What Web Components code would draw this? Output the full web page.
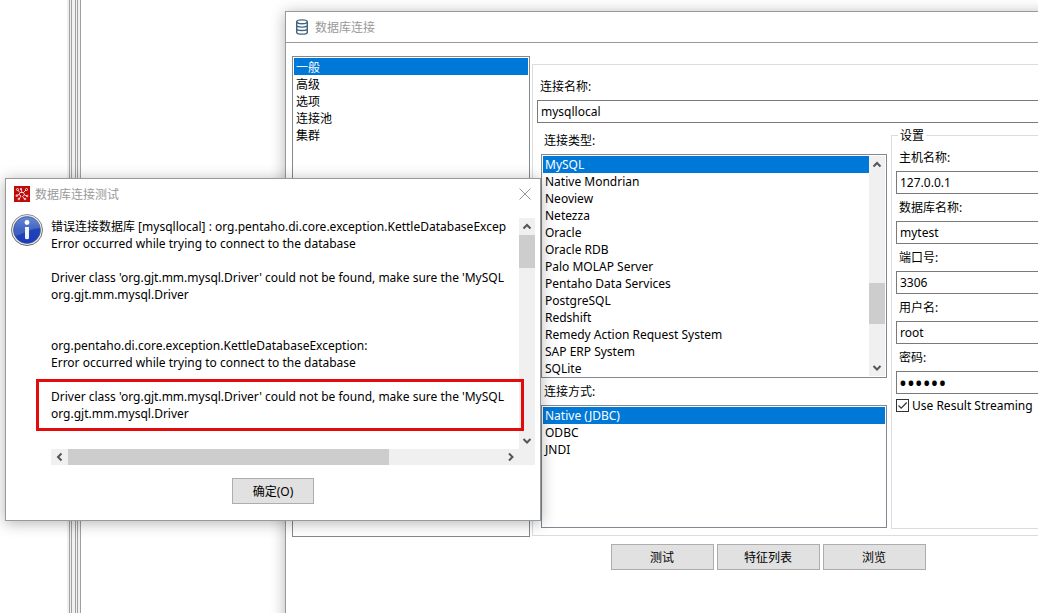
<!DOCTYPE html>
<html lang="zh-CN">
<head>
<meta charset="utf-8">
<title>数据库连接</title>
<style>
html, body { margin: 0; height: 100%; }
body { font: 12px/17px "Noto Sans", "Noto Sans CJK SC", sans-serif; color: #000; background: #fff; }
</style>
</head>
<body>
<app-desktop></app-desktop>

<template id="t-desktop">
<style>
:host { display: block; position: relative; min-height: 100vh; overflow: hidden; }
.workspace { display: flex; min-height: 100vh; }
.tree { width: 67px; }
.sash { display: flex; background: #f0f0f0; border-right: 1px solid #a0a0a0; padding: 0 2px; gap: 3px; }
.sash i { width: 1px; border: solid #a0a0a0; border-width: 0 1px; }
database-window { position: absolute; left: 285px; top: 11px; right: -213px; }
message-window { position: absolute; left: 5px; top: 178px; width: 536px; }
</style>
<div class="workspace"><div class="tree"></div><div class="sash"><i></i><i></i></div></div>
<database-window></database-window>
<message-window></message-window>
</template>

<template id="t-frame">
<style>
:host { display: block; box-sizing: border-box; border: 1px solid #999; background: #fff; box-shadow: 0 2px 14px rgba(0,0,0,.3); }
header { display: flex; align-items: center; gap: 5px; height: 30px; padding: 0 9px 0 8px; color: #999; }
:host([ruled]) header { border-bottom: 1px solid #999; }
h1 { flex: 1; margin: 0; font: inherit; }
</style>
<header><slot name="icon"></slot><h1><slot name="title"></slot></h1><slot name="action"></slot></header>
<slot></slot>
</template>

<template id="t-database">
<style>
:host { display: block; }
window-frame { min-height: 640px; }
svg { display: block; }
.body { display: flex; gap: 2px; padding: 13px 6px 0; }
.nav { width: 238px; height: 481px; }
.page { flex: 1; box-sizing: border-box; height: 472px; margin-top: 8px; border: 1px solid #dcdcdc; padding: 8px 4px 0; }
.cols { display: flex; gap: 4px; padding-left: 4px; }
.left { width: 346px; padding-top: 4px; }
.types { height: 224px; }
.access { height: 123px; }
fieldset { flex: 1; min-width: 0; box-sizing: border-box; height: 402px; margin: 4px 0 0; padding: 0 4px; border: 1px solid #dcdcdc; }
legend { margin: 0 0 0 2px; padding: 0 2px; }
.check { display: flex; align-items: center; gap: 3px; height: 22px; }
.check input { appearance: none; width: 13px; height: 13px; margin: 0; border: 1px solid #333; background: #fff url("data:image/svg+xml,%3Csvg xmlns='http://www.w3.org/2000/svg' viewBox='0 0 11 11'%3E%3Cpath d='M1.5 5.5l2.7 2.7 5.5-5.7' fill='none' stroke='%23333' stroke-width='1.2'/%3E%3C/svg%3E"); }
footer { display: flex; justify-content: center; gap: 3px; padding-top: 7px; }
</style>
<window-frame ruled>
  <svg slot="icon" width="16" height="16" viewBox="0 0 16 16" fill="none" stroke="#41647f" stroke-width="1.4"><path d="M2.700 2.800v10.400c0 2.600 10.600 2.600 10.600 0V2.800"/><ellipse cx="8" cy="2.800" rx="5.300" ry="1.900"/><path d="M2.700 6.300c0 2.400 10.600 2.400 10.600 0M2.700 9.700c0 2.400 10.600 2.400 10.600 0"/></svg>
  <span slot="title">数据库连接</span>
  <div class="body">
    <list-box class="nav" label="分类" items="一般|高级|选项|连接池|集群"></list-box>
    <div class="page">
      <text-field label="连接名称:" value="mysqllocal"></text-field>
      <div class="cols">
        <div class="left">
          <list-box class="types" caption="连接类型:" thumb="59 22" items="MySQL|Native Mondrian|Neoview|Netezza|Oracle|Oracle RDB|Palo MOLAP Server|Pentaho Data Services|PostgreSQL|Redshift|Remedy Action Request System|SAP ERP System|SQLite"></list-box>
          <list-box class="access" caption="连接方式:" items="Native (JDBC)|ODBC|JNDI"></list-box>
        </div>
        <fieldset>
          <legend>设置</legend>
          <text-field label="主机名称:" value="127.0.0.1"></text-field>
          <text-field label="数据库名称:" value="mytest"></text-field>
          <text-field label="端口号:" value="3306"></text-field>
          <text-field label="用户名:" value="root"></text-field>
          <text-field label="密码:" value="secret" type="password"></text-field>
          <label class="check"><input type="checkbox" checked>Use Result Streaming</label>
        </fieldset>
      </div>
    </div>
  </div>
  <footer><push-button>测试</push-button><push-button>特征列表</push-button><push-button>浏览</push-button></footer>
</window-frame>
</template>

<template id="t-list">
<style>
:host { display: block; }
label { display: block; height: 27px; line-height: 27px; padding-left: 3px; }
.box { display: flex; box-sizing: border-box; border: 1px solid #828790; padding: 1px; background: #fff; }
select { flex: 1; min-width: 0; height: 100%; appearance: none; border: 0; border-radius: 0; outline: 0; margin: 0; padding: 0; font: inherit; color: inherit; background: none; overflow: hidden; }
option { height: 17px; min-height: 17px; line-height: 17px; padding: 0 2px; box-sizing: border-box; }
option:checked { background: linear-gradient(#0078d7, #0078d7); -webkit-text-fill-color: #fff; }
</style>
<label for="s"></label><div class="box"><select id="s"></select></div>
</template>

<template id="t-field">
<style>
:host { display: block; }
label { display: block; height: 27px; line-height: 27px; padding-left: 3px; }
input { display: block; box-sizing: border-box; width: 100%; height: 23px; margin: 0; border: 1px solid #7a7a7a; border-radius: 0; padding: 0 3px; font: inherit; color: inherit; background: #fff; outline: 0; }
input[type=password] { font-size: 21px; padding: 0 2px; }
</style>
<label for="f"></label><input id="f">
</template>

<template id="t-button">
<style>
:host { display: block; width: 103px; }
button { box-sizing: border-box; display: block; width: 100%; height: 26px; margin: 0; padding: 0; border: 1px solid #adadad; border-radius: 0; background: #e1e1e1; font: inherit; color: #000; }
</style>
<button type="button"><slot></slot></button>
</template>

<template id="t-scroll">
<style>
:host { display: flex; flex-direction: column; width: 16px; background: #f0f0f0; }
.track { flex: 1; display: flex; flex-direction: column; }
.thumb { background: #cdcdcd; }
svg { display: block; width: 16px; height: 17px; fill: none; stroke: #555; stroke-width: 2; }
:host([horizontal]) { flex-direction: row; width: auto; height: 16px; }
:host([horizontal]) .track { flex-direction: row; }
:host([horizontal]) svg { width: 17px; height: 16px; }
:host([horizontal]) svg path { transform: rotate(-90deg); transform-origin: 8px 8px; }
</style>
<svg viewBox="0 0 16 16"><path d="M4.500 10L8 6.500l3.500 3.500"/></svg><div class="track"><div class="space"></div><div class="thumb"></div></div><svg viewBox="0 0 16 16"><path d="M4.500 6.500L8 10l3.500-3.500"/></svg>
</template>

<template id="t-message">
<style>
:host { display: block; }
svg { display: block; }
window-frame { position: relative; }
.close { border: 0; padding: 0; margin: 0; background: none; }
.content { display: flex; align-items: flex-start; gap: 8px; padding: 9px 5px 13px; }
.info { flex: none; margin-top: -4px; }
.log { flex: 1; min-width: 0; display: grid; grid-template: 231px 16px / 1fr 16px; background: #f0f0f0; }
textarea { display: block; box-sizing: border-box; width: 100%; height: 100%; margin: 0; border: 0; padding: 0; font: inherit; color: inherit; background: #fff; resize: none; overflow: hidden; white-space: pre; outline: 0; }
.mark { position: absolute; left: 30px; top: 200px; width: 488px; height: 52px; box-sizing: border-box; border: 3px solid #e30b0b; pointer-events: none; }
footer { display: flex; justify-content: center; padding-bottom: 16px; }
footer push-button { width: 82px; }
</style>
<window-frame>
  <svg slot="icon" width="16" height="16" viewBox="0 0 16 16"><path fill="#c00b0b" d="M0 0h16v16H0z"/><g fill="none" stroke="#fff" stroke-width=".8"><path d="M3.500 4L6 6.500l-1 2-2.500 1M6 6.500h3.500L12 4M9.500 6.500l1 2.500 2.500 1M5 8.500L7 10l-2 3M10.500 9L8.500 10.500l2 2.500M7 3l1 3.500"/><circle cx="3.500" cy="3.500" r="1"/><circle cx="12.500" cy="3.500" r="1"/><circle cx="7" cy="3" r=".7"/><circle cx="2.800" cy="9.700" r=".8"/><circle cx="13.200" cy="10" r=".8"/><circle cx="4.800" cy="13" r=".8"/><circle cx="11" cy="13" r=".8"/></g></svg>
  <span slot="title">数据库连接测试</span>
  <button class="close" slot="action" type="button" aria-label="关闭"><svg width="12" height="12" viewBox="0 0 12 12"><path d="M.5 .5l11 11M11.500 .5l-11 11" stroke="#999"/></svg></button>
  <div class="content">
    <svg class="info" width="32" height="32" viewBox="0 0 32 32">
      <defs><linearGradient id="blue" x2="0" y2="1"><stop offset="0" stop-color="#4a73cf"/><stop offset=".5" stop-color="#1e45b5"/><stop offset="1" stop-color="#1a3ac0"/></linearGradient><linearGradient id="rim" x2="0" y2="1"><stop offset="0" stop-color="#8c8c8c"/><stop offset="1" stop-color="#666"/></linearGradient></defs>
      <circle cx="16" cy="16" r="15.500" fill="#eee" stroke="url(#rim)"/><circle cx="16" cy="16" r="13.500" fill="url(#blue)" stroke="#4a5580" stroke-width=".6"/>
      <path d="M3 17C3 8 9 3.500 16 3.500S29 8 29 14C21 14 12 20 5 22 4 20.500 3 19 3 17z" fill="#fff" opacity=".16"/>
      <circle cx="16" cy="8.500" r="2.400" fill="#fff"/><path d="M14 13h4v11.500c-1 1-3 1-4 0z" fill="#f1f3fa"/>
    </svg>
    <div class="log">
      <textarea readonly wrap="off" aria-label="错误信息"></textarea>
      <scroll-bar thumb="0 17"></scroll-bar>
      <scroll-bar horizontal thumb="0 74"></scroll-bar>
    </div>
  </div>
  <footer><push-button>确定(O)</push-button></footer>
  <div class="mark"></div>
</window-frame>
</template>

<script>
class Base extends HTMLElement {
  constructor() {
    super();
    this.attachShadow({ mode: 'open' }).append(document.getElementById(this.constructor.template).content.cloneNode(true));
  }
  $(selector) { return this.shadowRoot.querySelector(selector); }
}
class AppDesktop extends Base { static template = 't-desktop'; }
class WindowFrame extends Base { static template = 't-frame'; }
class DatabaseWindow extends Base { static template = 't-database'; }
class PushButton extends Base { static template = 't-button'; }

class ScrollBar extends Base {
  static template = 't-scroll';
  connectedCallback() {
    const [start, size] = this.getAttribute('thumb').split(' ');
    this.$('.space').style.flex = `0 0 ${start}%`;
    this.$('.thumb').style.flex = `0 0 ${size}%`;
  }
}

class TextField extends Base {
  static template = 't-field';
  connectedCallback() {
    this.$('label').textContent = this.getAttribute('label');
    this.$('input').type = this.getAttribute('type') || 'text';
    this.$('input').value = this.getAttribute('value');
  }
}

class ListBox extends Base {
  static template = 't-list';
  connectedCallback() {
    const select = this.$('select'), label = this.$('label');
    const names = this.getAttribute('items').split('|');
    select.size = Math.max(names.length, 2);
    names.forEach((name, i) => select.add(new Option(name, name, i === 0, i === 0)));
    if (this.hasAttribute('caption')) {
      label.textContent = this.getAttribute('caption');
    } else {
      label.remove();
      select.setAttribute('aria-label', this.getAttribute('label'));
    }
    // The host's height is the height of the box; the caption comes on top of it.
    this.$('.box').style.height = getComputedStyle(this).height;
    this.style.height = 'auto';
    if (this.hasAttribute('thumb')) {
      const bar = document.createElement('scroll-bar');
      bar.setAttribute('thumb', this.getAttribute('thumb'));
      this.$('.box').append(bar);
    }
  }
}

class MessageWindow extends Base {
  static template = 't-message';
  connectedCallback() {
    this.$('textarea').value = [
      '错误连接数据库 [mysqllocal] : org.pentaho.di.core.exception.KettleDatabaseExcep',
      'Error occurred while trying to connect to the database',
      '',
      "Driver class 'org.gjt.mm.mysql.Driver' could not be found, make sure the 'MySQL",
      'org.gjt.mm.mysql.Driver',
      '', '',
      'org.pentaho.di.core.exception.KettleDatabaseException:',
      'Error occurred while trying to connect to the database',
      '',
      "Driver class 'org.gjt.mm.mysql.Driver' could not be found, make sure the 'MySQL",
      'org.gjt.mm.mysql.Driver',
      ''
    ].join('\n');
  }
}

customElements.define('push-button', PushButton);
customElements.define('scroll-bar', ScrollBar);
customElements.define('text-field', TextField);
customElements.define('list-box', ListBox);
customElements.define('window-frame', WindowFrame);
customElements.define('database-window', DatabaseWindow);
customElements.define('message-window', MessageWindow);
customElements.define('app-desktop', AppDesktop);
</script>
</body>
</html>
